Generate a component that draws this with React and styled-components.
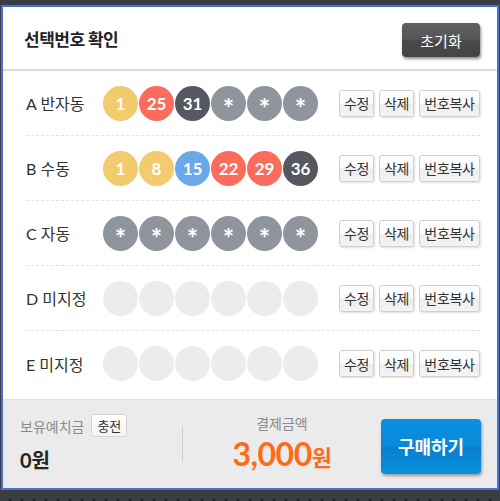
import React from 'react';
import styled, { createGlobalStyle } from 'styled-components';

const GlobalStyle = createGlobalStyle`
  html, body {
    margin: 0;
    padding: 0;
    overflow: hidden;
  }
  body {
    background-color: #3a3d42;
    background-image: radial-gradient(circle, #1f2124 1.2px, transparent 1.6px);
    background-size: 12px 12px;
    background-position: 4px 2px;
    font-family: Lato, "Noto Sans CJK KR", sans-serif;
  }
`;

const Page = styled.div`
  width: 500px;
  height: 501px;
  box-sizing: border-box;
  padding: 5px 1px 0 1px;
`;

const Panel = styled.div`
  width: 498px;
  height: 485px;
  box-sizing: border-box;
  border: 2px solid #4a6fd8;
  background: #fff;
  display: flex;
  flex-direction: column;
`;

const Header = styled.div`
  height: 62px;
  flex-shrink: 0;
  display: flex;
  align-items: center;
  justify-content: space-between;
  padding: 0 17px 0 21px;
  border-bottom: 2px solid #dcdcdc;
`;

const Title = styled.h1`
  margin: 0;
  font-size: 17px;
  font-weight: 700;
  color: #222;
  font-family: "Noto Sans CJK KR", sans-serif;
  letter-spacing: -0.5px;
`;

const ResetButton = styled.button`
  width: 78px;
  height: 34px;
  border: none;
  border-radius: 4px;
  background: linear-gradient(#606060 0%, #555 50%, #4a4a4a 51%, #444 100%);
  color: #fff;
  font-family: "Noto Sans CJK KR", sans-serif;
  font-size: 15px;
  box-shadow: 1px 2px 3px rgba(0, 0, 0, 0.45);
  margin-top: 4px;
`;

const List = styled.div`
  flex: 1;
  display: flex;
  flex-direction: column;
`;

const Row = styled.div`
  height: 65px;
  box-sizing: border-box;
  margin: 0 17px 0 23px;
  display: flex;
  align-items: center;
  border-bottom: ${({ $last }) => ($last ? 'none' : '1px dashed #e2e2e2')};
`;

const Label = styled.div`
  width: 77px;
  font-size: 16px;
  color: #333;
  font-family: Lato, "Noto Sans CJK KR", sans-serif;
`;

const Balls = styled.div`
  display: flex;
  gap: 1px;
`;

const ballColors = {
  y: '#f2cb6f',
  r: '#fb6c5d',
  d: '#55585e',
  b: '#69a9e8',
  g: '#8f949d',
  e: '#ececec',
};

const Ball = styled.div`
  width: 35px;
  height: 35px;
  border-radius: 50%;
  background: ${({ $c }) => ballColors[$c]};
  color: #fff;
  display: flex;
  align-items: center;
  justify-content: center;
  font-family: Lato, sans-serif;
  font-weight: 700;
  font-size: ${({ $star }) => ($star ? '27px' : '17px')};
  padding-top: ${({ $star }) => ($star ? '8px' : '0')};
  box-sizing: border-box;
`;

const Actions = styled.div`
  margin-left: auto;
  display: flex;
  gap: 5px;
`;

const SmallButton = styled.button`
  width: ${({ $wide }) => ($wide ? '61px' : '35px')};
  height: 27px;
  padding: 0;
  border: 1px solid #cfcfcf;
  border-radius: 3px;
  background: linear-gradient(#fff 0%, #fafafa 50%, #ececec 51%, #f4f4f4 100%);
  box-shadow: 1px 1px 2px rgba(0, 0, 0, 0.12);
  color: #333;
  font-family: "Noto Sans CJK KR", sans-serif;
  font-size: 14px;
  line-height: 1;
  letter-spacing: -0.3px;
  white-space: nowrap;
`;

const Footer = styled.div`
  height: 88px;
  flex-shrink: 0;
  background: #ebebeb;
  border-top: 1px solid #dedede;
  display: flex;
  align-items: center;
  padding: 0 16px 0 17px;
`;

const Balance = styled.div`
  width: 162px;
  display: flex;
  flex-direction: column;
  gap: 8px;
`;

const BalanceTop = styled.div`
  display: flex;
  align-items: center;
  gap: 7px;
`;

const Caption = styled.span`
  font-family: "Noto Sans CJK KR", sans-serif;
  font-size: 14px;
  color: #8a8a8a;
`;

const ChargeButton = styled.button`
  height: 23px;
  padding: 0 5px;
  border: 1px solid #d4d4d4;
  border-radius: 3px;
  background: linear-gradient(#fff, #f3f3f3);
  color: #333;
  font-family: "Noto Sans CJK KR", sans-serif;
  font-size: 13px;
  line-height: 1;
`;

const BalanceValue = styled.div`
  font-family: Lato, "Noto Sans CJK KR", sans-serif;
  font-size: 20px;
  font-weight: 700;
  color: #222;
`;

const Divider = styled.div`
  width: 1px;
  height: 36px;
  background: #d0d0d0;
`;

const Payment = styled.div`
  flex: 1;
  display: flex;
  flex-direction: column;
  align-items: center;
  gap: 2px;
`;

const Amount = styled.div`
  color: #ff6a18;
  font-family: Lato, "Noto Sans CJK KR", sans-serif;
  font-weight: 700;
  font-size: 32px;
  line-height: 38px;
  letter-spacing: -0.5px;
`;

const Won = styled.span`
  font-size: 22px;
  font-family: "Noto Sans CJK KR", sans-serif;
`;

const BuyButton = styled.button`
  width: 100px;
  height: 55px;
  border: none;
  border-radius: 4px;
  background: linear-gradient(#0b90e2 0%, #0888d8 50%, #077fcd 51%, #0a8fdc 100%);
  color: #fff;
  font-family: "Noto Sans CJK KR", sans-serif;
  font-size: 18px;
  font-weight: 700;
  box-shadow: 1px 2px 3px rgba(0, 0, 0, 0.35);
  margin-top: 4px;
`;

const rows = [
  { label: 'A 반자동', balls: [['y', '1'], ['r', '25'], ['d', '31'], ['g', '*'], ['g', '*'], ['g', '*']] },
  { label: 'B 수동', balls: [['y', '1'], ['y', '8'], ['b', '15'], ['r', '22'], ['r', '29'], ['d', '36']] },
  { label: 'C 자동', balls: Array(6).fill(['g', '*']) },
  { label: 'D 미지정', balls: Array(6).fill(['e', '']) },
  { label: 'E 미지정', balls: Array(6).fill(['e', '']) },
];

export default function App() {
  return (
    <Page>
      <GlobalStyle />
      <Panel>
        <Header>
          <Title>선택번호 확인</Title>
          <ResetButton>초기화</ResetButton>
        </Header>
        <List>
          {rows.map((row, i) => (
            <Row key={row.label} $last={i === rows.length - 1}>
              <Label>{row.label}</Label>
              <Balls>
                {row.balls.map(([c, n], j) => (
                  <Ball key={j} $c={c} $star={n === '*'}>{n}</Ball>
                ))}
              </Balls>
              <Actions>
                <SmallButton>수정</SmallButton>
                <SmallButton>삭제</SmallButton>
                <SmallButton $wide>번호복사</SmallButton>
              </Actions>
            </Row>
          ))}
        </List>
        <Footer>
          <Balance>
            <BalanceTop>
              <Caption>보유예치금</Caption>
              <ChargeButton>충전</ChargeButton>
            </BalanceTop>
            <BalanceValue>0원</BalanceValue>
          </Balance>
          <Divider />
          <Payment>
            <Caption>결제금액</Caption>
            <Amount>3,000<Won>원</Won></Amount>
          </Payment>
          <BuyButton>구매하기</BuyButton>
        </Footer>
      </Panel>
    </Page>
  );
}
